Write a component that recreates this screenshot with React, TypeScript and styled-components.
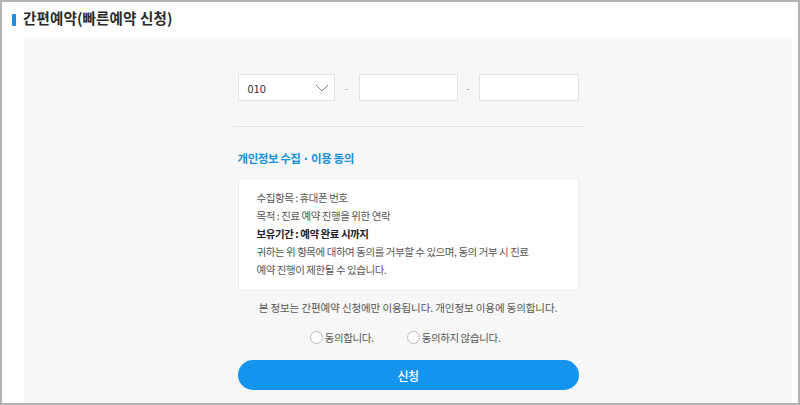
import React from "react";
import styled, { createGlobalStyle } from "styled-components";

const Global = createGlobalStyle`
  html, body { margin: 0; padding: 0; background: #fff; }
  body { font-family: "Noto Sans CJK KR", "Noto Sans", sans-serif; }
  * { box-sizing: border-box; }
`;

const Frame = styled.div`
  width: 800px;
  height: 405px;
  border: 2px solid #b3b3b3;
  display: flex;
  flex-direction: column;
  background: #fff;
  overflow: hidden;
`;

const Header = styled.div`
  height: 36px;
  display: flex;
  align-items: center;
  padding-left: 10px;
  gap: 7px;
`;

const Accent = styled.span`
  width: 4px;
  height: 12px;
  border-radius: 1px;
  background: #1a8fe0;
`;

const Title = styled.h1`
  margin: 0;
  font-size: 14.5px;
  font-weight: 700;
  letter-spacing: 0.15px;
  color: #2a2a2a;
  line-height: 1;
  padding-bottom: 3px;
`;

const Panel = styled.div`
  flex: 1;
  margin: 0 6px 0 22px;
  background: #f7f7f7;
  padding-top: 36px;
`;

const Column = styled.div`
  width: 341px;
  margin: 0 auto;
  display: flex;
  flex-direction: column;
`;

const PhoneRow = styled.div`
  display: grid;
  grid-template-columns: 97px 24px 99px 21px 100px;
  height: 27px;
`;

const Field = styled.div`
  background: #fff;
  border: 1px solid #e2e2e2;
  display: flex;
  align-items: center;
  justify-content: space-between;
  padding: 0 5px 0 9px;
  font-size: 11px;
  color: #333;
`;

const Dash = styled.span`
  display: flex;
  align-items: center;
  justify-content: center;
  font-size: 10px;
  color: #999;
`;

const Divider = styled.hr`
  border: 0;
  border-top: 1px solid #e3e3e3;
  margin: 25px -5px 0;
`;

const SectionTitle = styled.h2`
  margin: 24px 0 0;
  font-size: 11.5px;
  font-weight: 700;
  letter-spacing: -0.45px;
  color: #1b8ed8;
  line-height: 14px;
`;

const InfoBox = styled.div`
  margin-top: 13px;
  height: 113px;
  background: #fff;
  border: 1px solid #ececec;
  padding: 10px 0 0 18px;
`;

const InfoLine = styled.p<{ $strong?: boolean }>`
  margin: 0;
  font-size: 10.5px;
  line-height: 18px;
  letter-spacing: -0.45px;
  color: ${(p) => (p.$strong ? "#222" : "#555")};
  font-weight: ${(p) => (p.$strong ? 700 : 400)};
`;

const Notice = styled.p`
  margin: 9px 0 0;
  text-align: center;
  font-size: 10.5px;
  line-height: 16px;
  letter-spacing: -0.1px;
  color: #555;
`;

const RadioRow = styled.div`
  margin-top: 13px;
  display: flex;
  justify-content: center;
  gap: 33px;
  height: 16px;
  padding-right: 6px;
`;

const RadioLabel = styled.label`
  display: flex;
  align-items: center;
  gap: 2px;
  font-size: 10.5px;
  letter-spacing: -0.4px;
  color: #555;
`;

const Circle = styled.span`
  width: 13px;
  height: 13px;
  border-radius: 50%;
  border: 1px solid #bdbdbd;
  background: #fff;
`;

const SubmitButton = styled.button`
  margin-top: 15px;
  height: 30px;
  border: 0;
  border-radius: 15px;
  background: #1594ef;
  color: #fff;
  font-family: inherit;
  font-size: 12px;
  font-weight: 500;
  letter-spacing: -0.5px;
`;

const Chevron = () => (
  <svg width="14" height="8" viewBox="0 0 14 8" fill="none">
    <polyline points="1,1 7,7 13,1" stroke="#888" strokeWidth="1" />
  </svg>
);

export default function App() {
  return (
    <>
      <Global />
      <Frame>
        <Header>
          <Accent />
          <Title>간편예약(빠른예약 신청)</Title>
        </Header>
        <Panel>
          <Column>
            <PhoneRow>
              <Field>
                <span>010</span>
                <Chevron />
              </Field>
              <Dash>-</Dash>
              <Field />
              <Dash>-</Dash>
              <Field />
            </PhoneRow>
            <Divider />
            <SectionTitle>개인정보 수집 · 이용 동의</SectionTitle>
            <InfoBox>
              <InfoLine>수집항목 : 휴대폰 번호</InfoLine>
              <InfoLine>목적 : 진료 예약 진행을 위한 연락</InfoLine>
              <InfoLine $strong>보유기간 : 예약 완료 시까지</InfoLine>
              <InfoLine>
                귀하는 위 항목에 대하여 동의를 거부할 수 있으며, 동의 거부 시 진료
                <br />
                예약 진행이 제한될 수 있습니다.
              </InfoLine>
            </InfoBox>
            <Notice>본 정보는 간편예약 신청에만 이용됩니다. 개인정보 이용에 동의합니다.</Notice>
            <RadioRow>
              <RadioLabel>
                <Circle />
                동의합니다.
              </RadioLabel>
              <RadioLabel>
                <Circle />
                동의하지 않습니다.
              </RadioLabel>
            </RadioRow>
            <SubmitButton>신청</SubmitButton>
          </Column>
        </Panel>
      </Frame>
    </>
  );
}
